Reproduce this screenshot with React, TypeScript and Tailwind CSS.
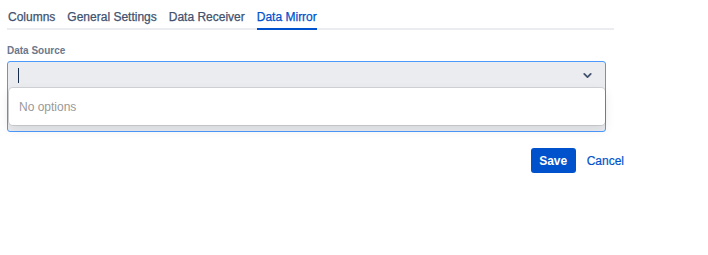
import React from 'react';

const tabs = ['Columns', 'General Settings', 'Data Receiver', 'Data Mirror'];

export default function App() {
  const active = 'Data Mirror';

  return (
    <div className="h-[255px] w-[708px] bg-white px-[7px] font-['Liberation_Sans',Arial,sans-serif]">
      <div className="w-[607px] border-b-2 border-[#ebecf0] pt-[10px]">
        <div className="-mb-[2px] flex gap-[12px] pl-[1px]">
          {tabs.map(tab => (
            <div
              key={tab}
              className={
                tab === active
                  ? 'border-b-2 border-[#0052cc] pb-[3px] text-[12px] leading-[15px] text-[#0052cc] [-webkit-text-stroke:0.25px_#0052cc]'
                  : 'border-b-2 border-transparent pb-[3px] text-[12px] leading-[15px] text-[#42526e] [-webkit-text-stroke:0.25px_#42526e]'
              }
            >
              {tab}
            </div>
          ))}
        </div>
      </div>

      <div className="pt-[15px] text-[10px] font-bold leading-[12px] text-[#6b778c]">Data Source</div>

      <div className="relative mt-[4px] h-[71px] w-[599px] rounded-[3px] border border-[#4c9aff] bg-[#ebecf0]">
        <div className="flex h-[26px] items-center justify-between pl-[10px] pr-[11px]">
          <span className="h-[15px] w-[1px] bg-[#172b4d]" />
          <svg width="13" height="13" viewBox="0 0 24 24" className="text-[#42526e]">
            <path d="M6 9l6 6 6-6" fill="none" stroke="currentColor" strokeWidth="3.4" strokeLinecap="round" strokeLinejoin="round" />
          </svg>
        </div>
        <div className="absolute left-[1px] right-[0px] top-[26px] flex h-[37px] items-center rounded-[4px] bg-white pl-[10px] shadow-[0_0_0_1px_rgba(0,0,0,0.1),0_4px_11px_rgba(0,0,0,0.1)]">
          <span className="text-[12px] text-[#999999]">No options</span>
        </div>
      </div>

      <div className="flex w-[617px] items-center justify-end pt-[16px]">
        <button className="h-[25px] w-[45px] rounded-[3px] bg-[#0052cc] text-[12px] font-bold text-white">Save</button>
        <button className="ml-[11px] text-[12px] text-[#0052cc] [-webkit-text-stroke:0.2px_#0052cc]">Cancel</button>
      </div>
    </div>
  );
}
